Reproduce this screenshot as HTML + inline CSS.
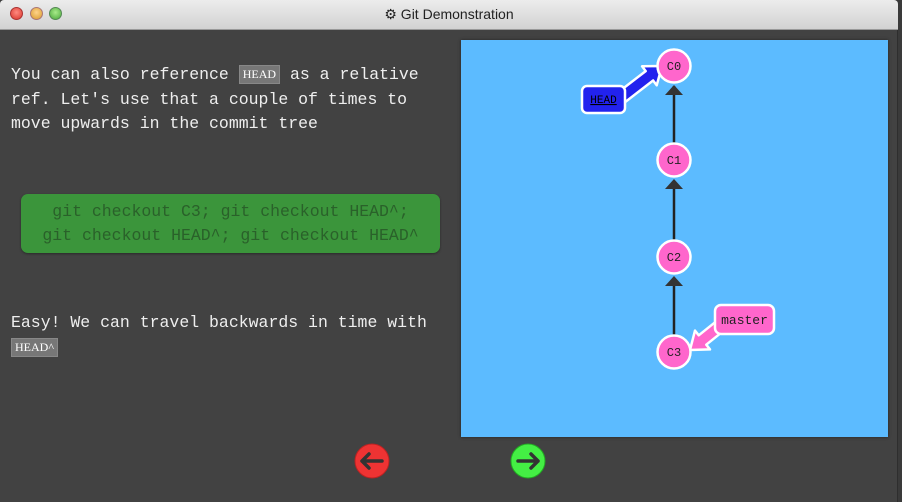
<!DOCTYPE html>
<html><head><meta charset="utf-8"><style>
*{margin:0;padding:0;box-sizing:border-box}
body{width:902px;height:502px;overflow:hidden;background:#3a3a3a;font-family:"Liberation Mono",monospace;position:relative}
#title{position:absolute;left:0;top:0;width:898px;height:30px;background:linear-gradient(#ececec,#d2d2d2);border-bottom:1px solid #999;border-radius:4px 4px 0 0}
#title .t{position:absolute;left:0;right:0;top:6px;text-align:center;font:14px "Liberation Sans",sans-serif;color:#222}
.dot{position:absolute;top:7px;width:13px;height:13px;border-radius:50%}
#main{position:absolute;left:0;top:30px;width:898px;height:472px;background:#424242;border-right:1px solid #2e2e2e}
.p{position:absolute;left:11px;color:#eee;font-size:16.5px;line-height:24.5px;white-space:pre}
.code{display:inline-block;background:#777;color:#fff;font-family:"Liberation Serif",serif;font-size:12px;line-height:17px;padding:0 3px;border:1px solid #888;vertical-align:1px}
#green{position:absolute;left:21px;top:194px;width:419px;height:59px;background:#3b953b;border-radius:7px;color:#2a612a;font-size:16.5px;line-height:24px;text-align:center;padding-top:6px;box-shadow:0 1px 2px #2a2a2a}
#viz{position:absolute;left:461px;top:40px;width:427px;height:397px;background:#5cbbff;box-shadow:0 0 3px #222}
</style></head><body>
<div id="title">
<div class="dot" style="left:10px;background:radial-gradient(circle at 50% 40%,#ff8a80,#d9352b);border:1px solid #a33"></div>
<div class="dot" style="left:30px;background:radial-gradient(circle at 50% 40%,#ffd38a,#d89a2c);border:1px solid #a77"></div>
<div class="dot" style="left:49px;background:radial-gradient(circle at 50% 40%,#a8ea8a,#4aa83a);border:1px solid #585"></div>
<div class="t">&#9881; Git Demonstration</div>
</div>
<div id="main"></div>
<div class="p" style="top:63px">You can also reference <span class="code">HEAD</span> as a relative
ref. Let's use that a couple of times to
move upwards in the commit tree</div>
<div id="green">git checkout C3; git checkout HEAD^;<br>git checkout HEAD^; git checkout HEAD^</div>
<div class="p" style="top:311px">Easy! We can travel backwards in time with
<span class="code">HEAD^</span></div>
<div id="viz"></div>
<svg style="position:absolute;left:0;top:0" width="902" height="502">
<g stroke="#222" stroke-width="2.5"><line x1="674" y1="86" x2="674" y2="143"/><line x1="674" y1="185" x2="674" y2="240"/><line x1="674" y1="282" x2="674" y2="335"/></g>
<g fill="#333"><path d="M665 95h18l-9-10z"/><path d="M665 189h18l-9-10z"/><path d="M665 286h18l-9-10z"/></g>
<polygon points="614.3,95.3 645.7,71.1 642.1,66.3 662,66 656.7,85.3 653.1,80.5 621.7,104.7" fill="#2222ee" stroke="#fff" stroke-width="2.5" stroke-linejoin="round"/>
<rect x="582" y="86" width="43" height="27" rx="5" fill="#2222ee" stroke="#fff" stroke-width="2.5"/>
<text x="603.5" y="103" text-anchor="middle" font-family="Liberation Mono" font-size="11" fill="#000" text-decoration="underline">HEAD</text>
<polygon points="721.25,317.3 698.75,335.3 695,330.6 690,350 710,349.4 706.25,344.7 728.75,326.7" fill="#ff66cc" stroke="#fff" stroke-width="2.5" stroke-linejoin="round"/>
<rect x="715" y="305" width="59" height="29" rx="6" fill="#ff66cc" stroke="#fff" stroke-width="2.5"/>
<text x="744.5" y="324" text-anchor="middle" font-family="Liberation Mono" font-size="13" fill="#222">master</text>
<g fill="#ff66cc" stroke="#fff" stroke-width="2.5"><circle cx="674" cy="66" r="16.5"/><circle cx="674" cy="160" r="16.5"/><circle cx="674" cy="257" r="16.5"/><circle cx="674" cy="352" r="16.5"/></g>
<g font-family="Liberation Mono" font-size="12" fill="#222" text-anchor="middle"><text x="674" y="70">C0</text><text x="674" y="164">C1</text><text x="674" y="261">C2</text><text x="674" y="356">C3</text></g>
<circle cx="372" cy="461" r="17" fill="#ee3333" stroke="#b22" stroke-width="1"/>
<path d="M382 461H362M369 454l-7 7 7 7" fill="none" stroke="#333" stroke-width="3.5" stroke-linecap="round" stroke-linejoin="round"/>
<circle cx="528" cy="461" r="17" fill="#44ee44" stroke="#2a2" stroke-width="1"/>
<path d="M518 461H538M531 454l7 7-7 7" fill="none" stroke="#333" stroke-width="3.5" stroke-linecap="round" stroke-linejoin="round"/>
</svg>
</body></html>
